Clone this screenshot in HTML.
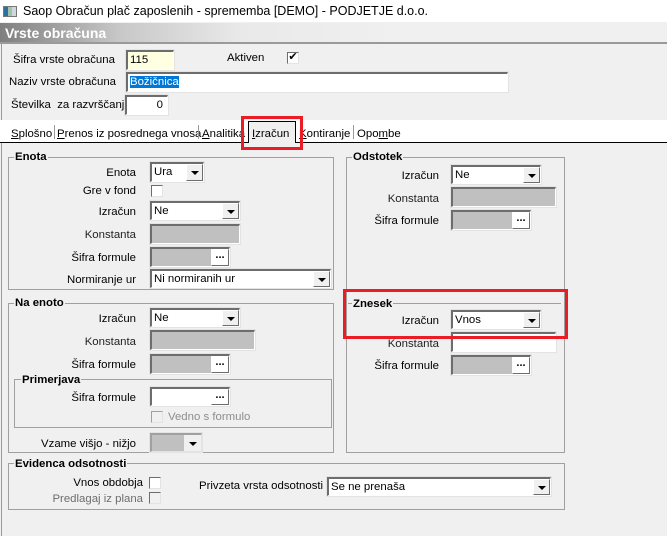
<!DOCTYPE html>
<html><head><meta charset="utf-8">
<style>
*{box-sizing:border-box;margin:0;padding:0}
body{width:667px;height:536px;background:#f0f0f0;font-family:"Liberation Sans",sans-serif;font-size:11.4px;color:#000;position:relative;overflow:hidden}
.a{position:absolute;white-space:nowrap}
.r{position:absolute;text-align:right;white-space:nowrap;margin-top:1px}
.in{position:absolute;background:#fff;border-top:2px solid #6d6d6d;border-left:2px solid #6d6d6d;border-right:1px solid #fff;border-bottom:1px solid #fff;outline:1px solid #e3e3e3;padding-left:2px;line-height:16px;font-size:11.4px}
.g{background:#c0c0c0}
.sel .btn,.dots{position:absolute;right:0;top:0;bottom:0;width:17px;background:#f0f0f0;border:1px solid;border-color:#fff #6d6d6d #6d6d6d #fff}
.sel .btn:after{content:"";position:absolute;left:4px;top:6px;border-left:4px solid transparent;border-right:4px solid transparent;border-top:4px solid #000}
.dots{width:18px;text-align:center;line-height:10px;font-weight:bold;font-size:11px;background:#fff}
.grp{position:absolute;border:1px solid #a0a0a0}
.gt{position:absolute;font-weight:bold;background:#f0f0f0;padding:0 1px;line-height:13px}
.cb{position:absolute;width:12px;height:12px;background:#fff;border-top:1px solid #6d6d6d;border-left:1px solid #6d6d6d;border-right:1px solid #e3e3e3;border-bottom:1px solid #e3e3e3}
.red{position:absolute;border:3px solid #ec1c24}
u{text-decoration:underline}
</style></head><body>
<div class="a" style="left:0;top:0;width:667px;height:22px;background:#fff"></div>
<div class="a" style="left:3px;top:6px;width:14px;height:11px;background:linear-gradient(90deg,#2d6fa3 0 4px,#9fc4a8 4px 8px,#cfd8df 8px);border:1px solid #777"></div>
<div class="a" style="left:23px;top:4px;font-size:12.5px">Saop Obračun plač zaposlenih - sprememba [DEMO] - PODJETJE d.o.o.</div>
<div class="a" style="left:0;top:23px;width:667px;height:20px;background:linear-gradient(90deg,#7f7f7f 0,#c8c8c8 120px,#e9e9e9 240px,#f0f0f0 400px)"></div>
<div class="a" style="left:5px;top:25px;color:#fff;font-weight:bold;font-size:14px">Vrste obračuna</div>
<div class="a" style="left:0;top:42px;width:667px;height:2px;background:#9a9a9a"></div>
<div class="a" style="left:1px;top:44px;width:1px;height:492px;background:#9a9a9a"></div>

<div class="a" style="left:13px;top:54px">Šifra vrste obračuna</div>
<div class="in" style="left:126px;top:50px;width:48px;height:20px;background:#ffffe1">115</div>
<div class="a" style="left:227px;top:52px">Aktiven</div>
<div class="cb" style="left:287px;top:52px;font-size:11px;line-height:9px;text-align:center">✔</div>
<div class="a" style="left:9px;top:76px">Naziv vrste obračuna</div>
<div class="in" style="left:126px;top:72px;width:382px;height:20px"><span style="background:#0078d7;color:#fff">Božičnica</span></div>
<div class="a" style="left:11px;top:99px">Številka&nbsp; za razvrščanje</div>
<div class="in" style="left:125px;top:95px;width:43px;height:20px;text-align:right;padding-right:4px">0</div>

<div class="a" style="left:0;top:120px;width:667px;height:23px;background:#fff"></div>
<div class="a" style="left:0;top:142px;width:667px;height:1px;background:#000"></div>
<div class="a" style="left:248px;top:121px;width:48px;height:22px;background:#f0f0f0;border:1px solid #000;border-bottom:none"></div>
<div class="a" style="left:11px;top:128px"><u>S</u>plošno</div>
<div class="a" style="left:54px;top:125px;width:1px;height:14px;background:#999"></div>
<div class="a" style="left:57px;top:128px"><u>P</u>renos iz posrednega vnosa</div>
<div class="a" style="left:198px;top:125px;width:1px;height:14px;background:#999"></div>
<div class="a" style="left:202px;top:128px"><u>A</u>nalitika</div>
<div class="a" style="left:252px;top:128px"><u>I</u>zračun</div>
<div class="a" style="left:299px;top:128px"><u>K</u>ontiranje</div>
<div class="a" style="left:353px;top:125px;width:1px;height:14px;background:#999"></div>
<div class="a" style="left:357px;top:128px">Opo<u>m</u>be</div>
<div class="red" style="left:241px;top:116px;width:62px;height:34px"></div>

<!-- Enota -->
<div class="grp" style="left:8px;top:157px;width:326px;height:133px"></div>
<div class="gt" style="left:14px;top:151px">Enota</div>
<div class="r" style="right:531px;top:166px">Enota</div>
<div class="in sel" style="left:150px;top:162px;width:54px;height:20px">Ura<div class="btn"></div></div>
<div class="r" style="right:531px;top:184px">Gre v fond</div>
<div class="cb" style="left:151px;top:185px"></div>
<div class="r" style="right:531px;top:205px">Izračun</div>
<div class="in sel" style="left:150px;top:201px;width:90px;height:19px">Ne<div class="btn"></div></div>
<div class="r" style="right:531px;top:228px;color:#222">Konstanta</div>
<div class="in g" style="left:150px;top:224px;width:90px;height:20px"></div>
<div class="r" style="right:531px;top:251px">Šifra formule</div>
<div class="in g" style="left:150px;top:247px;width:80px;height:20px"><div class="dots">...</div></div>
<div class="r" style="right:531px;top:273px">Normiranje ur</div>
<div class="in sel" style="left:150px;top:269px;width:181px;height:19px">Ni normiranih ur<div class="btn"></div></div>

<!-- Na enoto -->
<div class="grp" style="left:8px;top:303px;width:326px;height:150px"></div>
<div class="gt" style="left:14px;top:297px">Na enoto</div>
<div class="r" style="right:531px;top:312px">Izračun</div>
<div class="in sel" style="left:150px;top:308px;width:90px;height:19px">Ne<div class="btn"></div></div>
<div class="r" style="right:531px;top:335px;color:#222">Konstanta</div>
<div class="in g" style="left:150px;top:330px;width:105px;height:20px"></div>
<div class="r" style="right:531px;top:358px">Šifra formule</div>
<div class="in g" style="left:150px;top:354px;width:80px;height:20px"><div class="dots">...</div></div>
<div class="grp" style="left:14px;top:379px;width:318px;height:49px"></div>
<div class="gt" style="left:21px;top:374px">Primerjava</div>
<div class="r" style="right:531px;top:391px">Šifra formule</div>
<div class="in" style="left:150px;top:387px;width:80px;height:19px"><div class="dots">...</div></div>
<div class="cb" style="left:151px;top:411px;background:#f0f0f0;border-color:#a0a0a0 #e3e3e3 #e3e3e3 #a0a0a0"></div>
<div class="a" style="left:168px;top:411px;color:#8d8d8d">Vedno s formulo</div>
<div class="r" style="right:531px;top:437px">Vzame višjo - nižjo</div>
<div class="in sel g" style="left:150px;top:433px;width:52px;height:19px;border-color:#a0a0a0 #e3e3e3 #e3e3e3 #a0a0a0"><div class="btn" style="border-color:#f0f0f0"></div></div>

<!-- Odstotek -->
<div class="grp" style="left:346px;top:157px;width:219px;height:296px"></div>
<div class="gt" style="left:352px;top:151px">Odstotek</div>
<div class="r" style="right:228px;top:169px">Izračun</div>
<div class="in sel" style="left:451px;top:165px;width:90px;height:19px">Ne<div class="btn"></div></div>
<div class="r" style="right:228px;top:192px;color:#222">Konstanta</div>
<div class="in g" style="left:451px;top:187px;width:105px;height:20px"></div>
<div class="r" style="right:228px;top:214px">Šifra formule</div>
<div class="in g" style="left:451px;top:210px;width:80px;height:20px"><div class="dots">...</div></div>
<div class="a" style="left:348px;top:303px;width:213px;height:1px;background:#a0a0a0"></div>
<div class="gt" style="left:352px;top:298px">Znesek</div>
<div class="r" style="right:228px;top:314px">Izračun</div>
<div class="in sel" style="left:451px;top:310px;width:90px;height:19px">Vnos<div class="btn"></div></div>
<div class="r" style="right:228px;top:337px;color:#222">Konstanta</div>
<div class="in" style="left:451px;top:332px;width:105px;height:20px"></div>
<div class="r" style="right:228px;top:359px">Šifra formule</div>
<div class="in g" style="left:451px;top:355px;width:80px;height:20px"><div class="dots">...</div></div>
<div class="red" style="left:343px;top:289px;width:225px;height:50px"></div>

<!-- Evidenca -->
<div class="grp" style="left:8px;top:463px;width:557px;height:47px"></div>
<div class="gt" style="left:14px;top:458px">Evidenca odsotnosti</div>
<div class="r" style="right:524px;top:476px">Vnos obdobja</div>
<div class="cb" style="left:149px;top:477px"></div>
<div class="r" style="right:524px;top:492px;color:#6d6d6d">Predlagaj iz plana</div>
<div class="cb" style="left:149px;top:492px;background:#f0f0f0"></div>
<div class="a" style="left:199px;top:480px">Privzeta vrsta odsotnosti</div>
<div class="in sel" style="left:327px;top:477px;width:224px;height:19px">Se ne prenaša<div class="btn"></div></div>
</body></html>
